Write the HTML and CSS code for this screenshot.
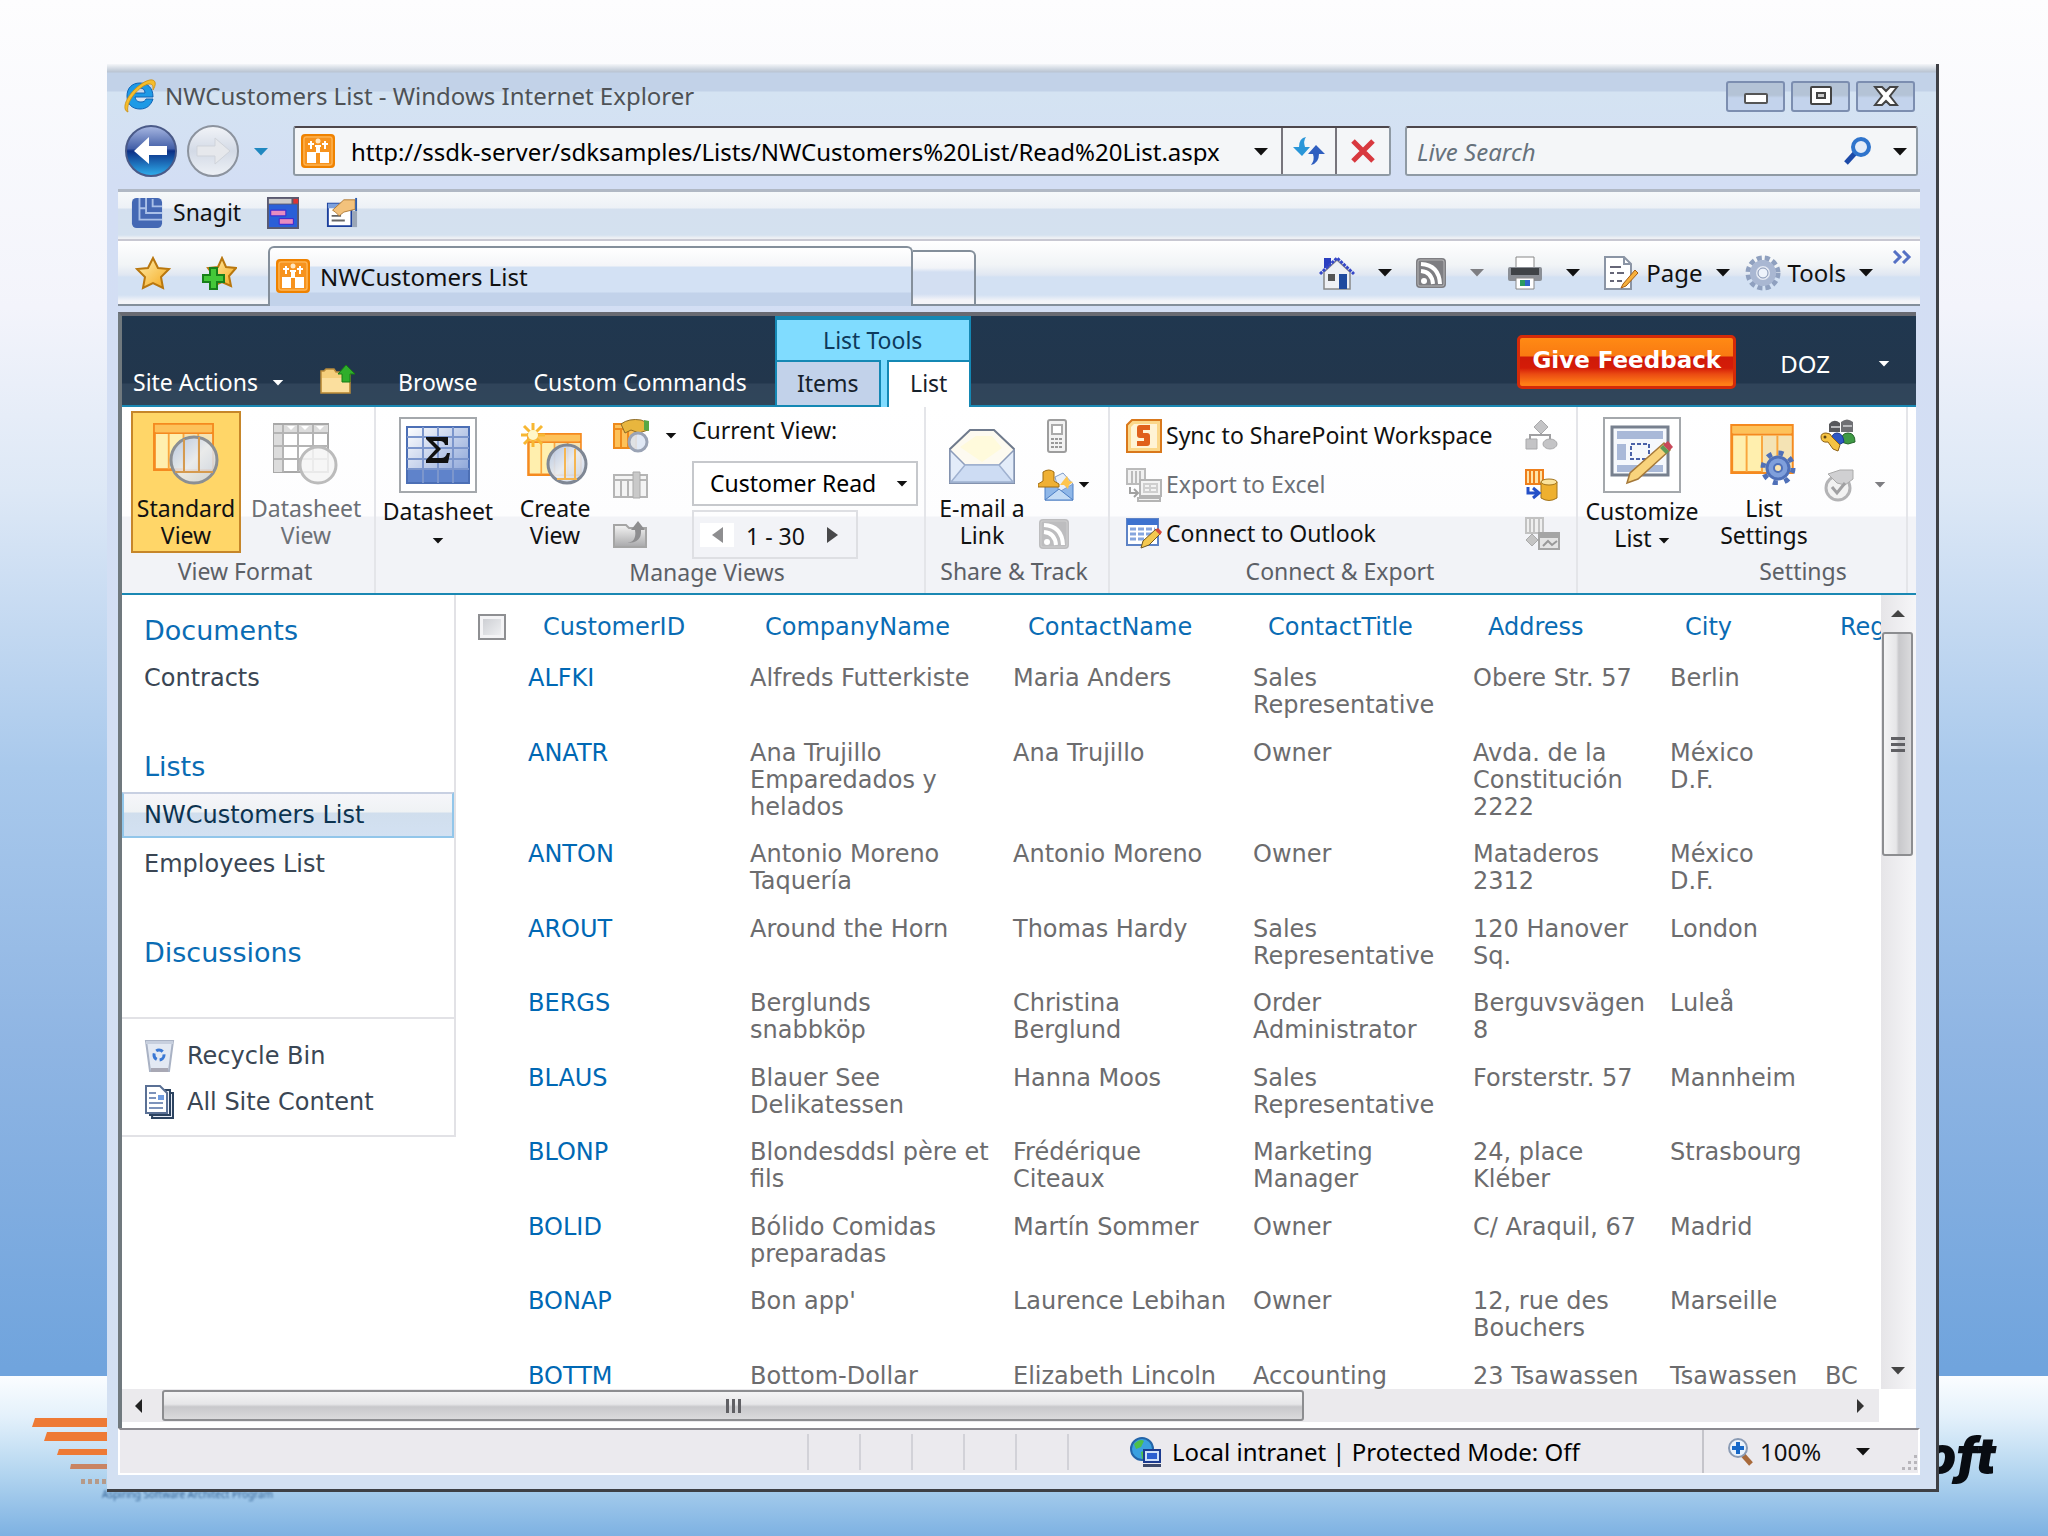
FILE: index.html
```html
<!DOCTYPE html>
<html lang="en">
<head>
<meta charset="utf-8">
<title>NWCustomers List - Windows Internet Explorer</title>
<link rel="stylesheet" href="styles.css">
</head>
<body>
<svg width="0" height="0" class="defs" aria-hidden="true">
  <defs>
    <linearGradient id="gold" x1="0" y1="0" x2="1" y2="1"><stop offset="0" stop-color="#fff0b0"/><stop offset="1" stop-color="#f5a81c"/></linearGradient>
    <linearGradient id="glass" x1="0" y1="0" x2="1" y2="1"><stop offset="0" stop-color="#a9bfe6"/><stop offset=".5" stop-color="#e8ecf4"/><stop offset="1" stop-color="#c4d0e4"/></linearGradient>
    <linearGradient id="back" x1="0" y1="0" x2="0" y2="1"><stop offset="0" stop-color="#a9b8e2"/><stop offset=".45" stop-color="#4460a8"/><stop offset=".5" stop-color="#0c2f86"/><stop offset="1" stop-color="#2fb0ee"/></linearGradient>
    <linearGradient id="fwd" x1="0" y1="0" x2="0" y2="1"><stop offset="0" stop-color="#f2f4f8"/><stop offset=".5" stop-color="#d3dae6"/><stop offset="1" stop-color="#eef1f6"/></linearGradient>
    <linearGradient id="grey" x1="0" y1="0" x2="0" y2="1"><stop offset="0" stop-color="#f4f4f4"/><stop offset="1" stop-color="#a8a8aa"/></linearGradient>
    <linearGradient id="sheet" x1="0" y1="0" x2="1" y2="1"><stop offset="0" stop-color="#ffffff"/><stop offset="1" stop-color="#7f9bd4"/></linearGradient>
    <symbol id="site" viewBox="0 0 34 34">
      <rect x="1" y="1" width="32" height="32" rx="3" fill="#f7931e" stroke="#ef8200" stroke-width="2"/>
      <rect x="3" y="3" width="28" height="28" rx="2" fill="none" stroke="#ffc065" stroke-width="1"/>
      <path d="M6 18h9v11H6zM19 18h9v11h-9zM15 11h4v8h-4z" fill="#fff"/>
      <circle cx="17" cy="7" r="2.500" fill="#ffe7c2"/>
      <path d="M10 7v8M7 10h6M24 7v8M21 10h6M14 12h6" stroke="#fff" stroke-width="2" fill="none"/>
    </symbol>
    <symbol id="down" viewBox="0 0 16 9"><path d="M1 1h14L8 8.500z" fill="currentColor"/></symbol>
    <symbol id="feed" viewBox="0 0 32 32">
      <rect x="1" y="1" width="30" height="30" rx="4" fill="currentColor"/>
      <rect x="3" y="3" width="26" height="26" rx="2" fill="none" stroke="#d8d8d8" stroke-opacity=".6"/>
      <circle cx="9" cy="24" r="3" fill="#fff"/>
      <path d="M6 14q11 1 12 13M6 7q18 1 19 20" fill="none" stroke="#fff" stroke-width="4"/>
    </symbol>
    <symbol id="cols" viewBox="0 0 66 52">
      <rect x="1.500" y="1.500" width="63" height="49" fill="#ffefae" stroke="#f58a1f" stroke-width="3"/>
      <path d="M33 12h31v38H33z" fill="#f4e3b4"/>
      <path d="M2 2h62v8H2z" fill="#fdc25a"/>
      <path d="M2 11h62" stroke="#f58a1f" stroke-width="2"/>
      <path d="M17 12v38M33 12v38M49 12v38" stroke="#f9a63d" stroke-width="2"/>
    </symbol>
  </defs>
</svg>

<div class="slide-band" aria-hidden="true">
  <svg class="stripes" viewBox="0 0 90 66" width="90" height="66"><g fill="#ee7a35"><path d="M4 0h86v9H1zM16 14h74v9H13zM28 31h62v6H26z"/><path d="M40 46h50v5H39z" fill="#c98463"/></g><path d="M50 64h40" stroke="#b59a8a" stroke-width="6" stroke-dasharray="4 3"/></svg>
  <span class="program">Aspiring Software Architect Program</span>
  <span class="vendor">Microsoft</span>
</div>

<div class="window">
  <header class="titlebar">
    <svg width="36" height="36" viewBox="0 0 36 36"><path d="M18 5c8 0 13 5 13 14H13c1 4 3 5 6 5s4-1 5-3h7c-2 6-6 10-13 10C10 31 5 26 5 18S10 5 18 5zm-5 10h10c0-3-2-5-5-5s-5 2-5 5z" fill="#1e9ae6" stroke="#0e62b4"/><path d="M6 34c-6-2-3-13 6-22S31-1 33 4c1 3-1 6-2 8 0-4 0-6-4-6C18 7 3 24 6 34z" fill="#f5bd2c" stroke="#c98d12" stroke-width=".8"/></svg>
    <h1>NWCustomers List - Windows Internet Explorer</h1>
    <div class="controls">
      <button aria-label="Minimize"><svg width="26" height="20" viewBox="0 0 26 20"><rect x="2" y="8" width="22" height="9" rx="1" fill="#fff" stroke="#555" stroke-width="2"/></svg></button>
      <button aria-label="Maximize"><svg width="26" height="20" viewBox="0 0 26 20"><rect x="3" y="1" width="20" height="17" rx="1" fill="#fff" stroke="#444" stroke-width="2"/><rect x="9" y="7" width="8" height="5" fill="#ccc" stroke="#444" stroke-width="2"/></svg></button>
      <button aria-label="Close"><svg width="26" height="20" viewBox="0 0 26 20"><path d="M2 1h7l4 4 4-4h7l-7 9 7 9h-7l-4-4-4 4H2l7-9z" fill="#fff" stroke="#444" stroke-width="2"/></svg></button>
    </div>
  </header>

  <div class="navbar">
    <button class="plain" aria-label="Back"><svg width="54" height="54" viewBox="0 0 54 54"><circle cx="27" cy="27" r="25" fill="url(#back)" stroke="#4a5a88" stroke-width="2"/><path d="M10 27l15-14v9h18v9H25v9z" fill="#fff"/></svg></button>
    <button class="plain" aria-label="Forward"><svg width="54" height="54" viewBox="0 0 54 54"><circle cx="27" cy="27" r="25" fill="url(#fwd)" stroke="#8c939e" stroke-width="2"/><path d="M44 27L29 14v8H11v10h18v8z" fill="#e6e8ec" stroke="#cfd3da"/></svg></button>
    <button class="plain recent" aria-label="Recent pages"><svg width="16" height="9"><use href="#down"/></svg></button>
    <div class="address">
      <svg width="34" height="34"><use href="#site"/></svg>
      <input type="text" aria-label="Address" value="http://ssdk-server/sdksamples/Lists/NWCustomers%20List/Read%20List.aspx">
      <button class="plain" aria-label="Address history"><svg width="16" height="9"><use href="#down"/></svg></button>
      <button class="cell first" aria-label="Refresh"><svg width="34" height="30" viewBox="0 0 34 30"><path d="M14 1Q7 2 7 11H1l9 9 8-9h-5Q11 5 14 1z" fill="#2a96d8"/><path d="M19 29q8-2 8-11h6l-9-9-8 9h5q2 6-2 11z" fill="#2f5fc0"/></svg></button>
      <button class="cell" aria-label="Stop"><svg width="26" height="26" viewBox="0 0 26 26"><path d="M3 3l20 20M23 3L3 23" stroke="#d8393f" stroke-width="5"/></svg></button>
    </div>
    <div class="search">
      <input type="text" aria-label="Live Search" placeholder="Live Search">
      <button class="plain" aria-label="Search"><svg width="30" height="30" viewBox="0 0 30 30"><path d="M3 27l10-11" stroke="#1c4aa8" stroke-width="5"/><circle cx="18" cy="11" r="8" fill="#e4ecf8" stroke="#2f74cc" stroke-width="4"/></svg></button>
      <button class="plain" aria-label="Search options"><svg width="16" height="9"><use href="#down"/></svg></button>
    </div>
  </div>

  <div class="linksbar">
    <svg width="34" height="32" viewBox="0 0 34 34"><rect x="1" y="1" width="32" height="32" rx="5" fill="#4468b4"/><path d="M9 1v23h24M16 1v16h17M23 2v8h10M9 12h7" fill="none" stroke="#a9c0e8" stroke-width="2"/></svg>
    <span>Snagit</span>
    <svg class="link-icon" width="34" height="32" viewBox="0 0 34 34"><path d="M0 0h34v34H0z" fill="#5a5a70"/><path d="M2 8h30v24H2z" fill="#2a5fd8"/><path d="M2 2h24v5H2z" fill="#ccc"/><path d="M28 2h5v5h-5z" fill="#d33"/><path d="M4 14h16v6H4zM13 23h15v6H13z" fill="#e88cc0" stroke="#3a1fd0"/></svg>
    <svg class="link-icon" width="34" height="32" viewBox="0 0 34 34"><path d="M2 7h25v24H2z" fill="#fff" stroke="#1b3f9c" stroke-width="2"/><path d="M2 7h25v5H2z" fill="#7ea1dc"/><path d="M6 20h10M6 25h14" stroke="#666" stroke-width="2"/><path d="M7 14L19 3h12v10l-12 3-5 4-4-4z" fill="#f3c27c" stroke="#b07a35"/><path d="M31 1h2v14h-2z" fill="#2d5caa"/><path d="M28 15h5v17h-5z" fill="#9aa6b6"/></svg>
  </div>

  <div class="tabrow">
    <div class="favs">
      <svg width="36" height="34" viewBox="0 0 36 34"><path d="M18 2l5 10 11 1-8 8 2 11-10-5-10 5 2-11-8-8 11-1z" fill="url(#gold)" stroke="#b9770e" stroke-width="2"/></svg>
      <svg width="36" height="34" viewBox="0 0 36 34"><path d="M21 2l4 9 10 1-7 8 2 10-9-4-9 4 1-10-6-8 10-1z" fill="url(#gold)" stroke="#b9770e" stroke-width="2"/><path d="M9 12h7v7h7v7h-7v7H9v-7H2v-7h7z" fill="#44c838" stroke="#18801a" stroke-width="2"/></svg>
    </div>
    <div class="page-tab"><svg width="34" height="34"><use href="#site"/></svg><span>NWCustomers List</span></div>
    <button class="new-tab" aria-label="New tab"></button>
    <div class="commands">
      <svg width="36" height="36" viewBox="0 0 36 36"><path d="M5 3h7v10H5z" fill="#2a3fc0"/><path d="M5 17L18 5l13 12v17H5z" fill="#eef0f4" stroke="#888" stroke-width="1.500"/><path d="M1 19L18 3l17 16" fill="none" stroke="#3648c8" stroke-width="3" stroke-dasharray="3 1"/><path d="M9 19h7v7H9z" fill="#555"/><path d="M20 19h8v15h-8z" fill="#1f4a9e"/></svg>
      <svg class="arrow" width="16" height="9"><use href="#down"/></svg>
      <svg class="dim" width="32" height="32"><use href="#feed"/></svg>
      <svg class="arrow dim" width="16" height="9"><use href="#down"/></svg>
      <svg width="36" height="34" viewBox="0 0 36 34"><path d="M9 1h18v12H9z" fill="#fff" stroke="#888"/><rect x="1" y="11" width="34" height="14" rx="2" fill="#8b8f96"/><path d="M4 12h28v7H4z" fill="#3f4347"/><path d="M9 22h18v11H9z" fill="#fff" stroke="#888"/><path d="M13 24h5v6h-5z" fill="#2b9b5f"/><path d="M18 24h5v6h-5z" fill="#2f64c8"/></svg>
      <svg class="arrow" width="16" height="9"><use href="#down"/></svg>
      <svg width="36" height="34" viewBox="0 0 36 34"><path d="M2 1h19l7 7v25H2z" fill="#fff" stroke="#8b95a5" stroke-width="2"/><path d="M21 1v7h7" fill="none" stroke="#8b95a5" stroke-width="2"/><path d="M7 11h11M7 17h4M14 17h7M7 25h4M14 25h5" stroke="#667" stroke-width="2"/><path d="M20 28l12-14 3 3-12 13-5 2z" fill="#f7b03c" stroke="#a55b12"/></svg>
      <button class="plain">Page</button>
      <svg class="arrow" width="16" height="9"><use href="#down"/></svg>
      <svg width="36" height="36" viewBox="0 0 36 36"><circle cx="18" cy="18" r="15" fill="none" stroke="#8fa0bf" stroke-width="5" stroke-dasharray="5 3"/><circle cx="18" cy="18" r="10" fill="#e4e9f3" stroke="#a9b7d2" stroke-width="6"/><circle cx="18" cy="18" r="5" fill="#eef3fb" stroke="#8595b4"/></svg>
      <button class="plain">Tools</button>
      <svg class="arrow" width="16" height="9"><use href="#down"/></svg>
      <svg class="more" width="20" height="14" viewBox="0 0 20 14"><path d="M2 1l6 6-6 6M11 1l6 6-6 6" fill="none" stroke="#5470c4" stroke-width="3"/></svg>
    </div>
  </div>

  <div class="page">
    <nav class="topbar">
      <button class="plain site-actions">Site Actions <svg width="12" height="7"><use href="#down"/></svg></button>
      <svg class="folder" width="36" height="30" viewBox="0 0 36 30"><path d="M1 28V6h3l2-2h8l2 3h14v21z" fill="#f5cf7c" stroke="#b88a3a" stroke-width="1.500"/><path d="M2 13h27v14H2z" fill="#fbdf9e"/><path d="M22 17V9h-4l8-9 9 9h-5v8z" fill="#2fae2b" stroke="#177a17"/></svg>
      <a href="#browse" class="tab">Browse</a>
      <a href="#custom" class="tab">Custom Commands</a>
      <div class="context">
        <div class="context-title">List Tools</div>
        <div class="context-tabs"><a href="#items" class="items">Items</a><a href="#list" class="current">List</a></div>
      </div>
      <button class="feedback">Give Feedback</button>
      <button class="plain user"><span>DOZ</span><svg width="12" height="7"><use href="#down"/></svg></button>
    </nav>

    <div class="ribbon">
      <section class="group view-format">
        <div class="tools">
          <button class="big selected"><svg width="68" height="62" viewBox="0 0 68 62"><use href="#cols" width="63" height="48"/><circle cx="42" cy="37" r="23" fill="url(#glass)" fill-opacity=".85" stroke="#8b8f93" stroke-width="3"/><path d="M32 16v33M47 14v35M23 49h38" stroke="#d59a4e" stroke-width="2" fill="none"/></svg>Standard<br>View</button>
          <button class="big off"><svg width="68" height="62" viewBox="0 0 68 62"><path d="M2 1h54v48H2z" fill="#fff" stroke="#a8a8a8" stroke-width="2"/><path d="M2 2h54v7H2zM2 9h9v40H2z" fill="#dcdcdc"/><path d="M2 10h54M2 23h54M2 36h54M11 2v47M26 2v47M41 2v47" stroke="#b4b4b4" stroke-width="2"/><path d="M15 3h8l-4 4zM29 3h8l-4 4zM44 3h8l-4 4z" fill="#fff"/><circle cx="46" cy="42" r="18" fill="#f4f4f4" fill-opacity=".85" stroke="#bbb" stroke-width="3"/></svg>Datasheet<br>View</button>
        </div>
        <h2>View Format</h2>
      </section>
      <section class="group datasheet">
        <div class="tools">
          <button class="big boxed"><span class="frame"><svg width="64" height="58" viewBox="0 0 64 58"><path d="M1 1h62v56H1z" fill="url(#sheet)" stroke="#4c6fb5" stroke-width="2"/><path d="M2 43h60v13H2z" fill="#5f83cb"/><path d="M1 11h62M1 22h62M1 33h62M1 43h62M17 1v56M32 1v56M47 1v56" stroke="#7c96cc" stroke-width="2"/><path d="M20 11h22v8h-3q-1-4-5-4h-7l8 8-9 9h9q5 0 6-5h3l-2 10H20v-3l10-11-10-10z" fill="#111"/></svg></span>Datasheet<br><svg width="12" height="7"><use href="#down"/></svg></button>
        </div>
      </section>
      <section class="group manage">
        <div class="tools">
          <button class="big create"><svg width="68" height="62" viewBox="0 0 68 62"><use href="#cols" x="6" y="10" width="55" height="43"/><path d="M12 0v24M0 12h24M3 3l18 18M21 3L3 21" stroke="#f7b733" stroke-width="3"/><circle cx="12" cy="12" r="5" fill="#fff7c8"/><circle cx="46" cy="41" r="19" fill="url(#glass)" fill-opacity=".9" stroke="#7f8794" stroke-width="3"/><path d="M44 25v32M54 26v30M36 56h20" stroke="#f5b652" stroke-width="2"/></svg>Create<br>View</button>
          <div class="stack">
            <div class="line"><svg width="36" height="34" viewBox="0 0 36 34"><path d="M1 5h22v24H1z" fill="#fdc25a" stroke="#ee8a1c" stroke-width="2"/><path d="M8 10v19M15 10v19M1 10h22" stroke="#ee8a1c" stroke-width="2"/><path d="M8 5q8-6 20-4l7 3v7l-9 3-8-3-6 3z" fill="#e8b63e" stroke="#8d6b25"/><path d="M31 1l5 1v10l-5-1z" fill="#58a745"/><circle cx="25" cy="23" r="9" fill="#dde6f4" fill-opacity=".9" stroke="#9aa3b5" stroke-width="3"/></svg><svg width="12" height="7"><use href="#down"/></svg></div>
            <div class="line"><svg width="36" height="28" viewBox="0 0 36 28"><path d="M1 4h33v22H1z" fill="#f4f4f4" stroke="#b5b5b5" stroke-width="2"/><path d="M1 9h33M8 9v17M15 9v17" stroke="#b5b5b5" stroke-width="2"/><path d="M20 1h7v26h-7z" fill="#c9c9c9" stroke="#aaa"/></svg></div>
            <div class="line"><svg width="36" height="30" viewBox="0 0 36 30"><path d="M1 28V6h12l3 3h17v19z" fill="url(#grey)" stroke="#a5a5a5" stroke-width="2"/><path d="M14 24q10-1 8-13h-4l7-9 7 9h-4q1 13-14 13z" fill="#8e8e90"/></svg></div>
          </div>
          <div class="chooser">
            <label for="view">Current View:</label>
            <div class="select"><select id="view"><option>Customer Read</option></select><svg width="12" height="7"><use href="#down"/></svg></div>
            <div class="pager"><button class="plain prev" aria-label="Previous page"><svg width="11" height="16" viewBox="0 0 11 16"><path d="M11 0v16L0 8z" fill="#8e8e90"/></svg></button><span>1 - 30</span><button class="plain" aria-label="Next page"><svg width="11" height="16" viewBox="0 0 11 16"><path d="M0 0v16l11-8z" fill="#48484a"/></svg></button></div>
          </div>
        </div>
        <h2>Manage Views</h2>
      </section>
      <section class="group share">
        <div class="tools">
          <button class="big"><svg width="68" height="62" viewBox="0 0 68 62"><path d="M2 26L22 7h24l20 19v34H2z" fill="#fdfaf0" stroke="#6f7a8c" stroke-width="2"/><path d="M12 24l16-11h16l10 12-20 14z" fill="#fffadc"/><path d="M2 27l15 15h34l15-15v33H2z" fill="#e3ecf9" stroke="#8c9cba" stroke-width="1.500"/><path d="M17 42L3 59h62L51 42z" fill="#cddcf3" stroke="#9fb1d0" stroke-width="1.500"/></svg>E-mail a<br>Link</button>
          <div class="stack">
            <div class="line"><svg width="36" height="34" viewBox="0 0 36 34"><rect x="10" y="1" width="18" height="32" rx="2" fill="#f2f2f2" stroke="#9d9d9d" stroke-width="2"/><path d="M14 6h10v9H14z" fill="#fff" stroke="#aaa" stroke-width="2"/><path d="M13 20h12M13 24h12M13 28h12" stroke="#999" stroke-width="2" stroke-dasharray="3 1"/></svg></div>
            <div class="line"><svg width="36" height="32" viewBox="0 0 36 32"><path d="M7 15h28v16H7z" fill="#8fb7e8" stroke="#4c7ec4"/><path d="M17 8l8-4 10 11-14 8z" fill="#e8f0fb" stroke="#7f9cc8"/><path d="M7 31l14-11 14 11z" fill="#c3dbf5" stroke="#4c7ec4"/><path d="M5 3q6-4 11 0v9l5 3v3H0v-3l5-3z" fill="#efb034" stroke="#9f6c12"/><path d="M29 7l2 5 4 1-4 3-1 4-4-4-4 0 3-4z" fill="#fdc54e"/></svg><svg width="12" height="7"><use href="#down"/></svg></div>
            <div class="line"><svg class="pale" width="32" height="32"><use href="#feed"/></svg></div>
          </div>
        </div>
        <h2>Share &amp; Track</h2>
      </section>
      <section class="group connect">
        <div class="tools">
          <div class="stack wide">
            <button class="line"><svg width="36" height="34" viewBox="0 0 36 34"><path d="M6 1h29v32H1V6z" fill="#fbd78a" stroke="#d9781b" stroke-width="2"/><path d="M8 5h23v24H5V8z" fill="#fff3d4"/><path d="M24 6H14q-3 0-3 3v7q0 3 3 3h4v3h-7v5h10q3 0 3-3v-7q0-3-3-3h-4v-3h7z" fill="#e0601b"/></svg>Sync to SharePoint Workspace</button>
            <button class="line off"><svg width="36" height="34" viewBox="0 0 36 34"><path d="M1 1h18v15H1z" fill="#f1f1f1" stroke="#bbb" stroke-width="2"/><path d="M6 3v13M10 3v13M14 3v13" stroke="#bbb" stroke-width="2"/><path d="M14 12h21v16H14zM12 30h22v3H12z" fill="#f3f3f3" stroke="#b4b4b4" stroke-width="2"/><path d="M18 16h13v8H18zM24 16v8M18 20h13" fill="none" stroke="#cfcfcf" stroke-width="2"/><path d="M4 19v6h7M8 21l4 4-4 4" fill="none" stroke="#a0a0a0" stroke-width="2"/></svg>Export to Excel</button>
            <button class="line"><svg width="36" height="32" viewBox="0 0 36 32"><path d="M1 1h31v26H1z" fill="#fff" stroke="#5e83c6" stroke-width="2"/><path d="M1 1h31v6H1z" fill="#3d72cf"/><path d="M4 11h25M4 16h25M4 21h15" stroke="#86a6de" stroke-width="3" stroke-dasharray="6 2"/><path d="M15 30l2-7 13-12 5 4-12 12z" fill="#f4c84f" stroke="#6d5520"/><path d="M29 12l3-2 4 4-2 3z" fill="#d5493b"/></svg>Connect to Outlook</button>
          </div>
          <div class="stack">
            <div class="line"><svg width="36" height="34" viewBox="0 0 36 34"><g fill="#c4c4c6" stroke="#a9a9ab"><path d="M17 1l7 7-7 7-7-7z"/><path d="M2 20h11v10H2z"/><ellipse cx="26" cy="25" rx="7" ry="5"/></g><path d="M17 14v3M6 20v-4h20v4" fill="none" stroke="#a0a0a2" stroke-width="2"/></svg></div>
            <div class="line"><svg width="36" height="34" viewBox="0 0 36 34"><path d="M2 2h17v14H2z" fill="#ffe3a8" stroke="#ee7f1c" stroke-width="2"/><path d="M6 3v13M10 3v13M15 3v13" stroke="#ee7f1c" stroke-width="2"/><path d="M17 14v16q8 5 16 0V14z" fill="#eeb02f" stroke="#a3741b"/><ellipse cx="25" cy="14" rx="8" ry="3" fill="#fbe39c" stroke="#a3741b"/><path d="M4 19v6h9M9 20l6 5-6 5" fill="none" stroke="#2450c8" stroke-width="3"/></svg></div>
            <div class="line"><svg width="36" height="34" viewBox="0 0 36 34"><path d="M2 1h17v15H2z" fill="#efefef" stroke="#c2c2c2" stroke-width="2"/><path d="M6 2v14M10 2v14M15 2v14" stroke="#c2c2c2" stroke-width="2"/><path d="M15 16h20v16H15z" fill="#e4e4e4" stroke="#a5a5a5" stroke-width="2"/><path d="M15 17h20v4H15z" fill="#a5a5a5"/><path d="M19 29l5-5 4 4 5-4" fill="none" stroke="#999" stroke-width="2"/><path d="M8 17l6 6-6 6-6-6z" fill="#c4c4c4" stroke="#aaa"/></svg></div>
          </div>
        </div>
        <h2>Connect &amp; Export</h2>
      </section>
      <section class="group customize">
        <div class="tools">
          <button class="big boxed"><span class="frame"><svg width="64" height="60" viewBox="0 0 64 60"><path d="M2 2h56v48H2z" fill="#f5f8fc" stroke="#77808e" stroke-width="3"/><path d="M7 6h46v8H7zM7 19h9v16H7zM7 40h46v7H7z" fill="#a9b9d8"/><path d="M21 19h18v15H21z" fill="none" stroke="#4a62a8" stroke-width="2" stroke-dasharray="4 2"/><path d="M17 58l3-10 34-30 6 7-32 29z" fill="#f8d37c" stroke="#a5793a" stroke-width="1.500"/><path d="M53 20l5-4 5 6-4 4z" fill="#c8485a"/><path d="M50 23l3-3 6 6-3 3z" fill="#5d9a58"/></svg></span>Customize<br>List <svg width="12" height="7"><use href="#down"/></svg></button>
        </div>
      </section>
      <section class="group settings">
        <div class="tools">
          <button class="big"><svg width="68" height="62" viewBox="0 0 68 62"><use href="#cols" x="0" y="1" width="64" height="50"/><circle cx="48" cy="45" r="15" fill="none" stroke="#4f70b8" stroke-width="5" stroke-dasharray="5 6.780"/><circle cx="48" cy="45" r="11" fill="#7f9fdb" stroke="#4f70b8" stroke-width="3"/><circle cx="48" cy="45" r="4" fill="#fbe5b0" stroke="#4f70b8" stroke-width="2"/></svg>List<br>Settings</button>
          <div class="stack">
            <div class="line"><svg width="36" height="34" viewBox="0 0 36 34"><path d="M9 5q5-6 11-1v9H9z" fill="#57585c"/><path d="M21 3q6-5 12 0v10H21z" fill="#6f7074"/><path d="M11 8h9M23 7h9" stroke="#b9babd" stroke-width="2"/><path d="M21 23q0-9 7-9t7 9l-7 2z" fill="#3f9a45" stroke="#24642a"/><path d="M11 23q0-9 6-9t7 9l-7 4z" fill="#2e57c4" stroke="#1c3a8c"/><path d="M1 18q0-4 5-4t6 4l8 8-2 6-5-2-5-7q-7 1-7-5z" fill="#f6c342" stroke="#8f6213"/><circle cx="5" cy="18" r="1.500" fill="#5d420e"/></svg></div>
            <div class="line"><svg width="36" height="34" viewBox="0 0 36 34"><circle cx="18" cy="20" r="12" fill="#f2f2f2" stroke="#b3b3b5" stroke-width="3"/><path d="M8 6l12-4h13v9l-8 6-8-2z" fill="#d0d0d2" stroke="#aaa"/><path d="M12 19l5 6 8-10" fill="none" stroke="#a0a0a2" stroke-width="3"/></svg><svg class="dim" width="12" height="7"><use href="#down"/></svg></div>
          </div>
        </div>
        <h2>Settings</h2>
      </section>
    </div>

    <div class="viewport">
      <div class="content">
        <aside class="quicklaunch">
          <h3><a href="#documents">Documents</a></h3>
          <a class="item" href="#contracts">Contracts</a>
          <h3><a href="#lists">Lists</a></h3>
          <a class="item active" href="#nwcustomers">NWCustomers List</a>
          <a class="item" href="#employees">Employees List</a>
          <h3><a href="#discussions">Discussions</a></h3>
          <div class="extras">
            <a href="#recycle"><svg width="31" height="36" viewBox="0 0 31 36"><path d="M2 3h27l-4 30H6z" fill="#e3e9f3" stroke="#a9b2c4" stroke-width="2"/><path d="M2 3h27v3H2z" fill="#c7cfde"/><path d="M7 30h17v4H7z" fill="#a8a8b4"/><circle cx="15" cy="17" r="5" fill="none" stroke="#3a78d4" stroke-width="3" stroke-dasharray="7 3"/></svg>Recycle Bin</a>
            <a href="#all"><svg width="31" height="36" viewBox="0 0 31 36"><path d="M10 9h19v25H8z" fill="#e7ecf6" stroke="#2c4360" stroke-width="2"/><path d="M6 6h20v25H6z" fill="#eef2fa" stroke="#2c4360" stroke-width="2"/><path d="M2 2h14l7 7v20H2z" fill="#fff" stroke="#5a7095" stroke-width="2"/><path d="M5 9h7M5 14h7M5 19h14M5 24h14" stroke="#7d93bb" stroke-width="2"/><path d="M14 11h6v5h-6z" fill="#6f9be0"/></svg>All Site Content</a>
          </div>
        </aside>
        <main class="list">
          <table>
            <colgroup><col class="c-check"><col class="c-id"><col class="c-company"><col class="c-name"><col class="c-title"><col class="c-address"><col class="c-city"><col class="c-region"></colgroup>
            <thead><tr><th><input type="checkbox" aria-label="Select all"></th><th>CustomerID</th><th>CompanyName</th><th>ContactName</th><th>ContactTitle</th><th>Address</th><th>City</th><th>Region</th></tr></thead>
            <tbody>
              <tr><td></td><td><a href="#ALFKI">ALFKI</a></td><td>Alfreds Futterkiste</td><td>Maria Anders</td><td>Sales Representative</td><td>Obere Str. 57</td><td>Berlin</td><td></td></tr>
              <tr><td></td><td><a href="#ANATR">ANATR</a></td><td>Ana Trujillo Emparedados y helados</td><td>Ana Trujillo</td><td>Owner</td><td>Avda. de la Constitución 2222</td><td>México<br>D.F.</td><td></td></tr>
              <tr><td></td><td><a href="#ANTON">ANTON</a></td><td>Antonio Moreno Taquería</td><td>Antonio Moreno</td><td>Owner</td><td>Mataderos 2312</td><td>México<br>D.F.</td><td></td></tr>
              <tr><td></td><td><a href="#AROUT">AROUT</a></td><td>Around the Horn</td><td>Thomas Hardy</td><td>Sales Representative</td><td>120 Hanover Sq.</td><td>London</td><td></td></tr>
              <tr><td></td><td><a href="#BERGS">BERGS</a></td><td>Berglunds snabbköp</td><td>Christina Berglund</td><td>Order Administrator</td><td>Berguvsvägen 8</td><td>Luleå</td><td></td></tr>
              <tr><td></td><td><a href="#BLAUS">BLAUS</a></td><td>Blauer See Delikatessen</td><td>Hanna Moos</td><td>Sales Representative</td><td>Forsterstr. 57</td><td>Mannheim</td><td></td></tr>
              <tr><td></td><td><a href="#BLONP">BLONP</a></td><td>Blondesddsl père et fils</td><td>Frédérique Citeaux</td><td>Marketing Manager</td><td>24, place Kléber</td><td>Strasbourg</td><td></td></tr>
              <tr><td></td><td><a href="#BOLID">BOLID</a></td><td>Bólido Comidas preparadas</td><td>Martín Sommer</td><td>Owner</td><td>C/ Araquil, 67</td><td>Madrid</td><td></td></tr>
              <tr><td></td><td><a href="#BONAP">BONAP</a></td><td>Bon app'</td><td>Laurence Lebihan</td><td>Owner</td><td>12, rue des Bouchers</td><td>Marseille</td><td></td></tr>
              <tr><td></td><td><a href="#BOTTM">BOTTM</a></td><td>Bottom-Dollar</td><td>Elizabeth Lincoln</td><td>Accounting</td><td>23 Tsawassen</td><td>Tsawassen</td><td>BC</td></tr>
            </tbody>
          </table>
        </main>
      </div>
      <div class="vscroll" aria-hidden="true">
        <svg width="16" height="9" viewBox="0 0 16 9"><path d="M1 8h14L8 1z" fill="#444"/></svg>
        <div class="vthumb"><i></i><i></i><i></i></div>
        <svg class="end" width="16" height="9"><use href="#down"/></svg>
      </div>
    </div>
    <div class="hscroll" aria-hidden="true">
      <svg width="9" height="16" viewBox="0 0 9 16"><path d="M8 1v14L1 8z" fill="#222"/></svg>
      <div class="hthumb"><i></i><i></i><i></i></div>
      <svg class="end" width="9" height="16" viewBox="0 0 9 16"><path d="M1 1v14l7-7z" fill="#333"/></svg>
    </div>
  </div>

  <footer class="status">
    <div class="panes"><i></i><i></i><i></i><i></i><i></i><i></i></div>
    <div class="zone">
      <svg width="34" height="32" viewBox="0 0 34 32"><circle cx="13" cy="13" r="11" fill="#3aa0e0" stroke="#2464a8" stroke-width="2"/><path d="M5 8q6-6 10-3l-3 6-5 2zM12 16l8-3-1 8-6 2z" fill="#4fbf4a"/><path d="M15 14h16v12H15z" fill="#cfe0f8" stroke="#1c3c90" stroke-width="2"/><path d="M18 17h10v6H18z" fill="#2b5fd0"/><path d="M14 28h18v3H14z" fill="#3d4a6a"/></svg>
      Local intranet | Protected Mode: Off
    </div>
    <div class="zoom">
      <svg width="28" height="30" viewBox="0 0 28 30"><path d="M17 18l8 9" stroke="#a8693a" stroke-width="5"/><circle cx="12" cy="11" r="9" fill="#e9f2fc" stroke="#8a9bb4" stroke-width="2"/><path d="M12 5v12M6 11h12" stroke="#1668c8" stroke-width="4"/></svg>
      <button class="plain">100% <svg width="16" height="9"><use href="#down"/></svg></button>
      <svg class="grip" width="17" height="17" viewBox="0 0 17 17"><path d="M13 1h3v3h-3zM13 7h3v3h-3zM7 7h3v3H7zM13 13h3v3h-3zM7 13h3v3H7zM1 13h3v3H1z" fill="#b8b6bb"/></svg>
    </div>
  </footer>
</div>
</body>
</html>
```
FILE: styles.css
```css
* { box-sizing: border-box; }

body {
  margin: 0;
  height: 100vh;
  padding: 64px 109px 44px 107px;
  position: relative;
  overflow: hidden;
  font-family: "Noto Sans", "Open Sans", sans-serif;
  font-size: 23px;
  line-height: 27px;
  color: #111;
  background: linear-gradient(#fdfdfe 0, #f3f4fb 20%, #dde8f6 32%, #a9c9ec 50%, #8fb5e3 68%, #70a4dd 89%);
}

h1, h2, h3 { margin: 0; font-weight: 400; }
a { color: inherit; text-decoration: none; }
svg { flex: none; }
.defs { position: absolute; }

button, input, select { font: inherit; color: inherit; margin: 0; }
button { padding: 0; }
.plain { border: 0; background: none; display: flex; align-items: center; }

/* Slide behind the window */
.slide-band {
  position: absolute;
  inset: auto 0 0 0;
  height: 160px;
  background: linear-gradient(#fbfdff 0, #e4f1fb 25%, #b4d6f0 60%, #7db1e2 100%);
}
.stripes { position: absolute; left: 31px; top: 42px; }
.program { position: absolute; left: 102px; top: 110px; font-size: 10px; line-height: 16px; color: #2f5f92; filter: blur(1px); }
.vendor { position: absolute; right: 52px; top: 44px; font: italic 900 50px/70px Inter, sans-serif; color: #080c12; }

/* Window frame */
.window {
  position: relative;
  height: 100%;
  display: flex;
  flex-direction: column;
  padding: 0 16px 14px 11px;
  border-right: 3px solid #3e4045;
  border-bottom: 3px solid #3e4045;
  background: linear-gradient(#f4f6f9 0, #b9c4d2 8px, #c2d2e8 9px, #c2d2e8 27px, #d4e3f2 28px, #d3def4 120px, #d3e0f2 100%);
}

.titlebar { display: flex; align-items: center; height: 48px; margin: 8px 5px 6px 4px; gap: 7px; color: #4e5256; flex: none; }
.titlebar h1 { font-size: 24px; line-height: 30px; }
.controls { display: flex; gap: 6px; margin-left: auto; }
.controls button {
  width: 59px; height: 31px;
  display: flex; align-items: center; justify-content: center;
  border: 2px solid #7c8eb0; border-radius: 3px;
  background: linear-gradient(#b4c3d6 45%, #c3d3ec 55%);
}

.navbar { display: flex; align-items: center; height: 50px; padding: 0 2px 0 6px; gap: 8px; flex: none; }
.recent { width: 37px; padding-left: 5px; color: #2088c0; }
.address, .search {
  display: flex; align-items: center; height: 50px;
  border: 2px solid #8f9aa4; border-top-color: #4d474c; border-radius: 3px;
  background: #f4f6f8;
}
.address { flex: 1; padding-left: 6px; }
.address input { flex: 1; min-width: 0; margin-left: 16px; font-size: 24px; }
.address .cell {
  width: 54px; height: 100%;
  display: flex; align-items: center; justify-content: center;
  border: 0; border-left: 2px solid #77757c; background: none;
}
.address .first { margin-left: 12px; }
.address input, .search input { border: 0; padding: 0; background: none; color: #000; }
.search { width: 513px; margin-left: 6px; padding: 0 8px 0 10px; gap: 19px; }
.search input { flex: 1; min-width: 0; font-size: 24px; font-style: italic; }
.search input::placeholder { color: #66727c; opacity: 1; }

.linksbar {
  display: flex; align-items: center; height: 52px; margin-top: 13px; padding: 0 12px 6px; gap: 9px; flex: none;
  border-top: 3px solid #b0b8c4; border-bottom: 2px solid #c8c8d2;
  background: linear-gradient(#f6f9fa 0, #edf1f6 16px, #d4e0ef 17px, #d4e1ef 43px, #eef0f4 46px);
}
.link-icon { margin-left: 16px; }

.tabrow { display: flex; align-items: flex-end; height: 65px; margin-bottom: 6px; flex: none; background: linear-gradient(#fff 0, #f1f4f6 24px, #e0e7f2 34px, #d3e1f3 36px, #d3e1f3 54px, #f3f4f8 60px); }
.favs {
  display: flex; align-items: center; gap: 30px; align-self: stretch; width: 150px; padding: 0 17px;
  border-bottom: 2px solid #848f9b;
}
.page-tab {
  display: flex; align-items: center; gap: 10px; width: 645px; height: 60px; padding: 0 0 2px 6px;
  border: 2px solid #848f9b; border-bottom: 0; border-radius: 6px 6px 0 0;
  background: linear-gradient(#fff, #f4f5f8 18px, #d3e1f4 19px, #d3e1f4 44px, #c2d2ea 45px);
  font-size: 24px;
}
.new-tab {
  width: 63px; height: 56px;
  border: 2px solid #848f9b; border-left: 0; border-radius: 0 6px 0 0;
  background: linear-gradient(#fff, #f2f4f8 16px, #d3dff2 20px, #d3dff2 42px, #f4f4f8 48px);
}
.commands {
  flex: 1; display: flex; align-items: center; justify-content: flex-end; align-self: stretch;
  padding-right: 8px; border-bottom: 2px solid #848f9b; font-size: 24px;
}
.commands svg + .plain { margin-left: 7px; }
.commands .arrow { margin: 0 22px; }
.commands .plain + .arrow { margin: 0 14px 0 12px; }
.commands .more { margin: 0 0 32px 4px; }
.dim { color: #7e7e82; }

/* Page */
.page {
  flex: 1; min-height: 0; display: flex; flex-direction: column;
  margin-right: 4px;
  border: 4px solid #70797e; border-top-color: #686a72; border-right: 0; border-bottom: 0;
  background: #fff;
}
.topbar {
  display: flex; align-items: flex-end; height: 91px; flex: none;
  border-bottom: 2px solid #1a88b3;
  background: linear-gradient(#20374f 0, #22364c 67px, #30445a 68px, #30465a 100%);
  color: #fff;
}
.site-actions { height: 45px; width: 187px; margin-left: 11px; gap: 14px; }
.folder { margin: 0 14px 10px 0; }
.topbar .tab { padding: 0 28px; line-height: 45px; }
.context {
  width: 196px; margin-bottom: -2px; align-self: stretch;
  display: flex; flex-direction: column;
  border: 2px solid #1488b4; border-top-width: 4px; border-bottom: 0;
  background: #80dcff; color: #0d3a5c;
}
.context-title { flex: 1; display: flex; align-items: center; justify-content: center; }
.context-tabs { display: flex; gap: 6px; }
.context-tabs a { height: 47px; line-height: 43px; text-align: center; color: #15212c; border-top: 2px solid #1488b4; }
.items { width: 104px; border-right: 2px solid #1488b4; border-bottom: 2px solid #1488b4; background: #c2d2ea; }
.context-tabs .current { flex: 1; background: #fff; border-left: 2px solid #1488b4; }
.feedback {
  width: 219px; height: 54px; margin: 0 44px 16px auto; padding-bottom: 4px;
  border: 3px solid #d42a08; border-radius: 5px;
  background: linear-gradient(#ff8a14 0, #f97a12 18px, #cf1a08 19px, #d41c08 30px, #ea4a12 36px, #ff7e16 46px);
  color: #fff; font: 700 23px/27px "DejaVu Sans", sans-serif;
}
.user { height: 45px; margin: 0 26px 19px 0; gap: 48px; font-size: 24px; }

/* Ribbon */
.ribbon {
  display: flex; height: 188px; flex: none;
  border-bottom: 2px solid #1a88b3;
  background: linear-gradient(#fff 0, #fdfdfe 109px, #f2f3f7 110px);
}
.group { display: flex; flex-direction: column; padding: 4px 0 8px; }
.group h2 { padding-right: 6px; font-size: 23px; line-height: 27px; text-align: center; color: #5c6066; }
.tools { display: flex; flex: 1; }
.view-format, .manage, .share, .connect, .settings { border-right: 2px solid #e4e5e9; }
.view-format { width: 254px; }
.view-format .tools { padding-left: 9px; gap: 9px; }
.datasheet { width: 120px; padding-left: 4px; }
.manage { width: 430px; }
.manage .tools { padding-left: 19px; }
.share { width: 184px; }
.share .tools { padding-left: 10px; }
.connect { width: 468px; }
.connect .tools { padding-left: 16px; }
.customize { width: 128px; }
.settings { width: 202px; }
.settings .tools { padding-left: 12px; }

.big {
  display: block; height: 142px; padding-top: 8px;
  border: 1px solid transparent; background: none; text-align: center; line-height: 27px;
  min-width: 92px;
}
.big > svg:first-child { display: block; margin: 0 auto 10px; }
.big.selected { width: 110px; border: 2px solid #c6862a; background: #ffd668; padding-top: 7px; }
.off { color: #6c7076; }
.big br + svg, .big svg:last-child { vertical-align: middle; }
.view-format .off { width: 112px; }
.boxed { padding-top: 5px; margin: 0 auto; }
.frame { display: flex; align-items: center; justify-content: center; width: 78px; height: 76px; margin: 0 auto 5px; border: 2px solid #a4a8ac; background: #fff; }
.create { width: 80px; min-width: 80px; }

.stack { display: flex; flex-direction: column; margin-left: 10px; }
.create + .stack { width: 79px; margin-left: 18px; }
.line { display: flex; align-items: center; height: 49px; gap: 16px; padding: 0; border: 0; background: none; white-space: nowrap; }
.share .line, .connect .line { gap: 4px; }
.settings .line { gap: 18px; }
.stack.wide { width: 388px; margin: 0; }
.pale { color: #bdbdbf; }

.chooser { width: 226px; }
.chooser label { display: block; line-height: 38px; margin-bottom: 12px; }
.select { display: flex; align-items: center; height: 45px; margin-bottom: 4px; padding: 0 8px 0 16px; border: 2px solid #c6c8cc; background: #fff; }
.select select { flex: 1; border: 0; padding: 0; background: none; appearance: none; color: #000; }
.pager { display: flex; align-items: center; justify-content: space-between; width: 166px; height: 49px; padding: 0 18px 0 6px; border: 2px solid #dedfe3; }
.pager .prev { width: 34px; height: 24px; justify-content: center; background: #fff; }
.pager span { padding: 4px 10px 0 0; }

/* Content */
.viewport { flex: 1; min-height: 0; display: flex; }
.content { flex: 1; min-width: 0; display: flex; align-items: flex-start; overflow: hidden; font-family: "DejaVu Sans", Verdana, sans-serif; font-size: 24px; line-height: 27px; }
.quicklaunch { width: 334px; flex: none; padding-top: 18px; border: 2px solid #e2e2e6; border-width: 0 2px 2px 0; color: #3a4654; }
.quicklaunch h3 { padding: 0 22px; font-size: 27px; line-height: 36px; color: #0a6cb4; }
.item { display: block; padding: 9px 22px; }
.item + h3 { margin-top: 48px; }
.item + h3 + .item, .quicklaunch h3:first-child + .item { margin-top: 7px; }
.quicklaunch .active { border: 2px solid #92c6ea; border-top-color: #c8d0e2; padding: 8px 20px 7px; color: #0c3350; background: linear-gradient(#f6f6fa 0, #eff2f4 18px, #d0deed 19px, #d3e1f2 100%); margin-bottom: 4px; }
.extras { margin-top: 46px; padding: 14px 22px 10px; border-top: 2px solid #e2e2e6; }
.extras a { display: flex; align-items: center; gap: 12px; height: 46px; }

.list { flex: 1; min-width: 0; }
table { table-layout: fixed; width: 1569px; border-collapse: collapse; color: #6c6c6e; }
.c-check { width: 72px; }
.c-id { width: 222px; }
.c-company { width: 263px; }
.c-name { width: 240px; }
.c-title { width: 220px; }
.c-address { width: 197px; }
.c-city { width: 155px; }
.c-region { width: 200px; }
th { height: 60px; padding: 4px 0 0 15px; text-align: left; font-weight: 400; color: #0a6cb4; }
th:first-child { padding-left: 22px; }
td { padding: 10px 20px 10px 0; vertical-align: top; }
tr:nth-child(odd) td { padding-bottom: 11px; }
td a { color: #0068b4; }
th input {
  appearance: none; display: block; width: 28px; height: 26px; margin: 0;
  border: 2px solid #8e8f92; box-shadow: inset 0 0 0 3px #f4f4f6;
  background: linear-gradient(135deg, #c8cacf, #f4f5f7);
}

.vscroll { width: 35px; padding-right: 2px; display: flex; flex-direction: column; align-items: center; padding-top: 14px; background: linear-gradient(90deg, #e6e5e8, #f6f6f8); }
.vthumb {
  width: 31px; height: 224px; margin-top: 14px;
  display: flex; flex-direction: column; align-items: center; justify-content: center; gap: 3px;
  border: 2px solid #8c8d90; border-radius: 3px;
  background: linear-gradient(90deg, #f4f4f5, #e6e6e8 45%, #c8c8cb 55%, #dadadc);
}
.vthumb i { width: 14px; height: 3px; background: #606064; }
.vscroll .end { margin: auto 0 14px; color: #444; }
.hscroll { display: flex; align-items: center; height: 33px; margin: 0 37px 6px 0; padding: 0 14px 0 12px; flex: none; background: #ebeaed; }
.hthumb {
  width: 66%; height: 31px; margin-left: 19px;
  display: flex; align-items: center; justify-content: center; gap: 3px;
  border: 2px solid #8c8d90; border-radius: 3px;
  background: linear-gradient(#f4f4f5, #e6e6e8 45%, #c8c8cb 55%, #dadadc);
}
.hthumb i { width: 3px; height: 14px; background: #606064; }
.hscroll .end { margin-left: auto; }

/* Status bar */
.status {
  display: flex; align-items: center; height: 47px; flex: none;
  border: 2px solid #fff; border-top-color: #8b8a90;
  background: #ebeaee;
}
.panes { flex: 1; display: flex; justify-content: flex-end; gap: 50px; }
.panes i { width: 2px; height: 36px; background: #d2d2d8; }
.zone { display: flex; align-items: center; gap: 9px; width: 573px; margin-left: 60px; font-size: 24px; color: #000; }
.zoom { display: flex; align-items: center; gap: 6px; align-self: stretch; width: 216px; padding-left: 22px; border-left: 2px solid #c4c4ca; }
.zoom .plain { gap: 34px; font-size: 24px; }
.grip { margin: auto 0 2px auto; }
```
